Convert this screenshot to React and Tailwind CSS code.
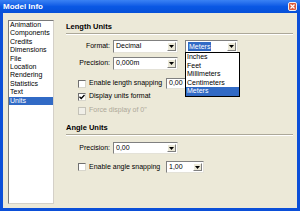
import React from "react";

function Arrow() {
  return (
    <div className="w-[9px] self-stretch my-[1px] mr-[1px] bg-[#ece9d8] border border-t-white border-l-white border-b-[#808080] border-r-[#808080] flex items-center justify-center">
      <svg width="5" height="3" viewBox="0 0 5 3">
        <path d="M0 0 L5 0 L2.5 3 Z" fill="#000" />
      </svg>
    </div>
  );
}

function Combo({ cls, children, list }) {
  return (
    <div className={`relative flex items-stretch bg-white border border-t-[#808080] border-l-[#808080] border-b-[#e4e2d8] border-r-[#e4e2d8] ${cls}`}>
      <div className="flex-1 flex items-center pl-[2px] whitespace-nowrap overflow-hidden">{children}</div>
      <Arrow />
      {list}
    </div>
  );
}

function Checkbox({ checked, disabled }) {
  return (
    <div
      className={
        disabled
          ? "w-[8px] h-[8px] shrink-0 bg-[#f0efe8] border border-[#c4c2b8] flex items-center justify-center"
          : "w-[8px] h-[8px] shrink-0 bg-white border border-t-[#707070] border-l-[#707070] border-b-[#d8d6cc] border-r-[#d8d6cc] flex items-center justify-center"
      }
    >
      {checked && (
        <svg width="6" height="6" viewBox="0 0 6 6">
          <path d="M0.5 2.8 L2.2 4.5 L5.5 1" stroke="#000" strokeWidth="1.3" fill="none" />
        </svg>
      )}
    </div>
  );
}

const items = [
  "Animation",
  "Components",
  "Credits",
  "Dimensions",
  "File",
  "Location",
  "Rendering",
  "Statistics",
  "Text",
  "Units",
];

const units = ["Inches", "Feet", "Millimeters", "Centimeters", "Meters"];

export default function App() {
  return (
    <div className="w-[300px] h-[211px] flex flex-col bg-[#0b4fd8] font-['Liberation_Sans',Arial,sans-serif] text-[7px] text-black overflow-hidden">
      <div className="h-[13px] flex items-center bg-linear-to-b from-[#3a82f4] via-[#0a58e4] to-[#0650d8] pl-[3px] pr-[3px]">
        <span className="flex-1 text-white font-bold text-[8px] leading-none">Model Info</span>
        <div className="w-[9px] h-[9px] rounded-[2px] border border-[#f2f0f0] bg-[#dc5a3c] flex items-center justify-center">
          <svg width="5" height="5" viewBox="0 0 5 5">
            <path d="M0.5 0.5 L4.5 4.5 M4.5 0.5 L0.5 4.5" stroke="#fff" strokeWidth="1.2" />
          </svg>
        </div>
      </div>
      <div className="flex-1 flex mx-[3px] mb-[3px] bg-[#ece9d8] pt-[7px] pl-[5px] pr-[4px] pb-[4px]">
        <div className="w-[46px] h-full bg-white border border-t-[#7a7a7a] border-l-[#7a7a7a] border-r-[#d4d0c8] border-b-[#d4d0c8]">
          {items.map((it) => (
            <div
              key={it}
              className={
                it === "Units"
                  ? "h-[8.4px] leading-[8.4px] pl-[1px] bg-[#316ac5] text-white whitespace-nowrap"
                  : "h-[8.4px] leading-[8.4px] pl-[1px] whitespace-nowrap"
              }
            >
              {it}
            </div>
          ))}
        </div>
        <div className="ml-[12px] flex-1 flex flex-col">
          <div className="h-[13px] flex items-center font-bold text-[7.5px]">Length Units</div>
          <div className="h-[2px] border-t border-t-[#aca899] border-b border-b-white" />
          <div className="mt-[5px] h-[13px] flex items-center">
            <span className="w-[44px] text-right">Format:</span>
            <Combo cls="ml-[3px] w-[65px] h-[13px]">Decimal</Combo>
            <Combo
              cls="ml-[7px] w-[53px] h-[13px] z-10"
              list={
                <div className="absolute left-[-1px] top-[11px] w-[55px] bg-white border border-black">
                  {units.map((u) => (
                    <div
                      key={u}
                      className={
                        u === "Meters"
                          ? "h-[8.6px] leading-[8.6px] pl-[1px] bg-[#316ac5] text-white"
                          : "h-[8.6px] leading-[8.6px] pl-[1px]"
                      }
                    >
                      {u}
                    </div>
                  ))}
                </div>
              }
            >
              <span className="bg-[#316ac5] text-white px-[1px] leading-[9px]">Meters</span>
            </Combo>
          </div>
          <div className="mt-[4px] h-[13px] flex items-center">
            <span className="w-[44px] text-right">Precision:</span>
            <Combo cls="ml-[3px] w-[65px] h-[13px]">0,000m</Combo>
          </div>
          <div className="mt-[8px] h-[11px] flex items-center pl-[12px]">
            <Checkbox />
            <span className="ml-[3px] w-[77px] whitespace-nowrap overflow-hidden">Enable length snapping</span>
            <Combo cls="w-[38px] h-[11px]">0,00</Combo>
          </div>
          <div className="mt-[2px] h-[11px] flex items-center pl-[12px]">
            <Checkbox checked />
            <span className="ml-[3px] whitespace-nowrap">Display units format</span>
          </div>
          <div className="mt-[3px] h-[11px] flex items-center pl-[12px]">
            <Checkbox disabled />
            <span className="ml-[3px] whitespace-nowrap text-[#aca899]">Force display of 0"</span>
          </div>
          <div className="mt-[6px] h-[12px] flex items-center font-bold text-[7.5px]">Angle Units</div>
          <div className="h-[2px] border-t border-t-[#aca899] border-b border-b-white" />
          <div className="mt-[6px] h-[12px] flex items-center">
            <span className="w-[44px] text-right">Precision:</span>
            <Combo cls="ml-[3px] w-[65px] h-[12px]">0,00</Combo>
          </div>
          <div className="mt-[7px] h-[12px] flex items-center pl-[12px]">
            <Checkbox />
            <span className="ml-[3px] w-[77px] whitespace-nowrap overflow-hidden">Enable angle snapping</span>
            <Combo cls="w-[38px] h-[12px]">1,00</Combo>
          </div>
        </div>
      </div>
    </div>
  );
}
